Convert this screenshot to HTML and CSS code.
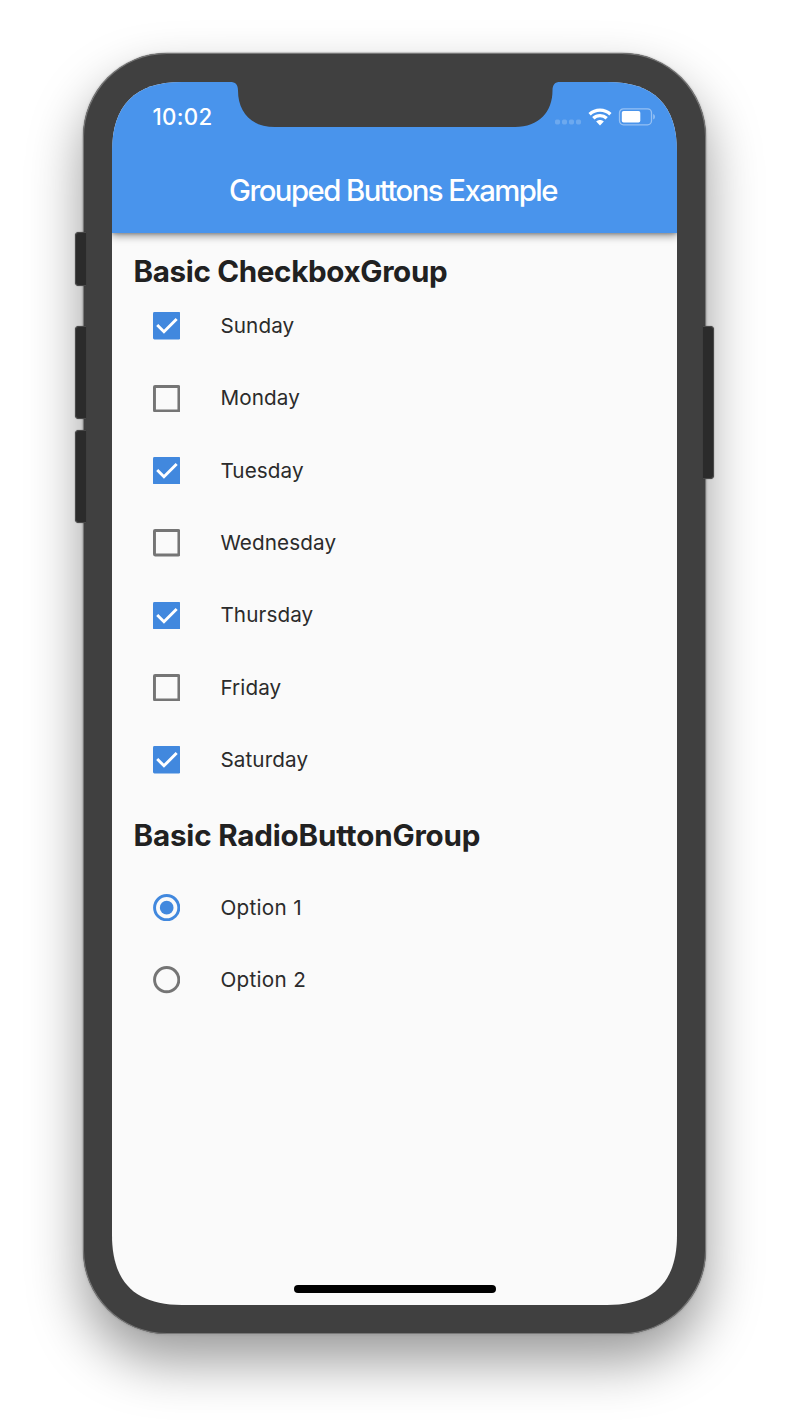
FILE: index.html
```html
<!DOCTYPE html>
<html lang="en">
<head>
<meta charset="utf-8">
<title>Grouped Buttons Example</title>
<link rel="stylesheet" href="styles.css">
</head>
<body>
<div class="phone">
  <span class="key key-mute"></span>
  <span class="key key-up"></span>
  <span class="key key-down"></span>
  <span class="key key-power"></span>
  <main class="screen">
    <header class="appbar">
      <svg class="notch" width="330" height="46" viewBox="0 0 330 46"><path d="M0 0C5.500 0 8 2.500 8 8.500C8 30 21 45 45 45H285C309 45 322.500 30 322.500 8.500C322.500 2.500 325 0 330 0V-1H0Z" fill="#404040"/></svg>
      <div class="status">
        <span class="time">10:02</span>
        <div class="indicators">
          <svg width="27" height="6" viewBox="0 0 27 6" fill="#fff" fill-opacity=".2"><rect x="0" y=".5" width="5" height="5" rx="1.700"/><rect x="7" y=".5" width="5" height="5" rx="1.700"/><rect x="14" y=".5" width="5" height="5" rx="1.700"/><rect x="21" y=".5" width="5" height="5" rx="1.700"/></svg>
          <svg width="24" height="18" viewBox="0 0 24 18"><g fill="none" stroke="#fff" stroke-width="3.300"><path d="M1.600 6.300C7.400.8 16.600.8 22.400 6.300"/><path d="M5.300 10.300C9.100 6.700 14.900 6.700 18.700 10.300"/></g><path d="M8.200 13.400C10.300 11.400 13.700 11.400 15.800 13.400L12 17.400Z" fill="#fff"/></svg>
          <svg width="37" height="18" viewBox="0 0 37 18"><rect x="1.500" y=".8" width="32" height="16" rx="4" fill="none" stroke="#fff" stroke-opacity=".42" stroke-width="1.300"/><rect x="3.800" y="3" width="18.500" height="11.500" rx="1.800" fill="#fff"/><path d="M35.200 6C37.500 6.800 37.500 10.800 35.200 11.600Z" fill="#fff" fill-opacity=".42"/></svg>
        </div>
      </div>
      <h1 class="title">Grouped Buttons Example</h1>
    </header>
    <section class="group">
      <h2 class="heading heading-check">Basic CheckboxGroup</h2>
      <ul class="options">
        <li class="option"><svg class="mark" viewBox="0 0 28 28"><rect width="28" height="28" rx="1.500" fill="#4188de"/><path d="M4.300 13.300L11.200 20.200L24.200 7.200" fill="none" stroke="#fff" stroke-width="3"/></svg><span class="label">Sunday</span></li>
        <li class="option"><svg class="mark" viewBox="0 0 28 28"><rect x="1.500" y="1.500" width="25" height="25" rx=".6" fill="none" stroke="#757575" stroke-width="3"/></svg><span class="label">Monday</span></li>
        <li class="option"><svg class="mark" viewBox="0 0 28 28"><rect width="28" height="28" rx="1.500" fill="#4188de"/><path d="M4.300 13.300L11.200 20.200L24.200 7.200" fill="none" stroke="#fff" stroke-width="3"/></svg><span class="label">Tuesday</span></li>
        <li class="option"><svg class="mark" viewBox="0 0 28 28"><rect x="1.500" y="1.500" width="25" height="25" rx=".6" fill="none" stroke="#757575" stroke-width="3"/></svg><span class="label">Wednesday</span></li>
        <li class="option"><svg class="mark" viewBox="0 0 28 28"><rect width="28" height="28" rx="1.500" fill="#4188de"/><path d="M4.300 13.300L11.200 20.200L24.200 7.200" fill="none" stroke="#fff" stroke-width="3"/></svg><span class="label">Thursday</span></li>
        <li class="option"><svg class="mark" viewBox="0 0 28 28"><rect x="1.500" y="1.500" width="25" height="25" rx=".6" fill="none" stroke="#757575" stroke-width="3"/></svg><span class="label">Friday</span></li>
        <li class="option"><svg class="mark" viewBox="0 0 28 28"><rect width="28" height="28" rx="1.500" fill="#4188de"/><path d="M4.300 13.300L11.200 20.200L24.200 7.200" fill="none" stroke="#fff" stroke-width="3"/></svg><span class="label">Saturday</span></li>
      </ul>
    </section>
    <section class="group">
      <h2 class="heading heading-radio">Basic RadioButtonGroup</h2>
      <ul class="options options-radio">
        <li class="option"><svg class="mark" viewBox="0 0 28 28"><circle cx="14" cy="14" r="12.400" fill="none" stroke="#4188de" stroke-width="3"/><circle cx="14" cy="14" r="7" fill="#4188de"/></svg><span class="label">Option 1</span></li>
        <li class="option"><svg class="mark" viewBox="0 0 28 28"><circle cx="14" cy="14" r="12.400" fill="none" stroke="#757575" stroke-width="3"/></svg><span class="label">Option 2</span></li>
      </ul>
    </section>
    <div class="home"></div>
  </main>
</div>
</body>
</html>
```

FILE: styles.css
```css
* { box-sizing: border-box; }

body {
  margin: 0;
  width: 788px;
  height: 1420px;
  overflow: hidden;
  background: #fff;
  font-family: Inter, "Liberation Sans", sans-serif;
  font-variant-ligatures: none;
  color: #212121;
}

.phone {
  position: relative;
  width: 623px;
  height: 1281px;
  margin: 53px 0 0 83px;
  padding: 29px;
  border-radius: 84px;
  background: #404040;
  box-shadow: inset 0 0 0 1px #777, 0 0 0 .5px #aaa, 0 27px 54px rgba(0, 0, 0, .4), 0 0 3px rgba(0, 0, 0, .2);
}

.key {
  position: absolute;
  width: 11px;
  background: #2b2b2b;
  border: 1px solid #494949;
  box-shadow: 0 0 1px #333;
}

.key-mute, .key-up, .key-down { left: -8.500px; border-radius: 4px 0 0 4px; border-right: 0; }
.key-mute { top: 179px; height: 54px; }
.key-up { top: 273px; height: 93px; }
.key-down { top: 377px; height: 93px; }
.key-power { right: -7.500px; top: 273px; height: 153px; border-radius: 0 4px 4px 0; border-left: 0; }

.screen {
  position: relative;
  display: flex;
  flex-direction: column;
  width: 565px;
  height: 1223px;
  background: #fafafa;
  clip-path: path("M0 70C0 23 23 0 70 0H495C542 0 565 23 565 70V1153C565 1200 542 1223 495 1223H70C23 1223 0 1200 0 1153Z");
}

.appbar {
  position: relative;
  height: 151px;
  flex: none;
  background: #4994ec;
  box-shadow: 0 3px 8px rgba(0, 0, 0, .4), 0 1px 3px rgba(0, 0, 0, .2);
}

.notch { position: absolute; left: 117.500px; top: 0; display: block; }

.status {
  display: flex;
  justify-content: space-between;
  align-items: center;
  height: 69px;
  padding: 0 22px 0 40.500px;
}

.time { font-size: 22.300px; font-weight: 500; line-height: 30px; letter-spacing: .3px; color: #fff; }
.indicators { display: flex; align-items: center; gap: 6px; }
.indicators svg { display: block; }
.indicators svg:first-child { margin-top: 11px; }

.title {
  margin: 0;
  padding: 20px 3px 0 0;
  color: #fff;
  font-size: 29.300px;
  line-height: 40px;
  font-weight: 500;
  letter-spacing: -1.540px;
  text-align: center;
}

.heading {
  margin: 0;
  padding-left: 21.500px;
  font-size: 29.600px;
  line-height: 40px;
  font-weight: 650;
}

.heading-check { margin-top: 18px; margin-bottom: -1px; letter-spacing: -.350px; }
.heading-radio { margin-top: 19px; margin-bottom: 16.500px; letter-spacing: -.180px; }

.options { margin: 0; padding: 0; list-style: none; }

.option {
  display: flex;
  align-items: center;
  gap: 40.500px;
  height: 72.300px;
  padding-left: 40.500px;
}

.mark { display: block; width: 27.400px; height: 27.400px; }
.label { padding-bottom: 1px; font-size: 20.700px; letter-spacing: .1px; color: #2b2b2b; }
.options-radio .label { letter-spacing: .3px; }

.home {
  width: 202px;
  height: 8px;
  margin: auto auto 12px;
  border-radius: 4px;
  background: #000;
}
```
